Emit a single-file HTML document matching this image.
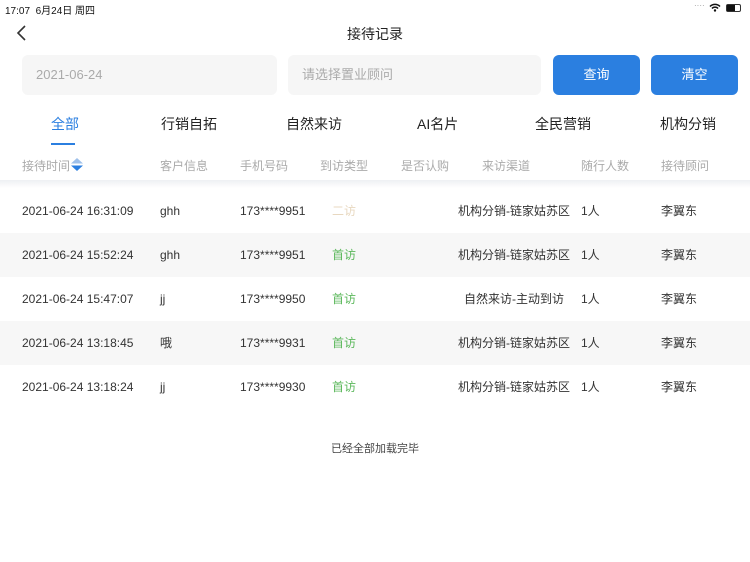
<!DOCTYPE html>
<html><head><meta charset="utf-8"><style>
*{margin:0;padding:0;box-sizing:border-box}
body{width:750px;height:562px;background:#fff;font-family:"Liberation Sans","Noto Sans CJK SC",sans-serif;position:relative;overflow:hidden;color:#333}
.a{position:absolute;white-space:nowrap}
.inp{position:absolute;top:55px;height:40px;background:#f6f6f6;border-radius:6px;color:#aaa;font-size:13px;line-height:40px;padding-left:14px}
.btn{position:absolute;top:55px;height:40px;background:#2b7fe0;border-radius:6px;color:#fff;font-size:13px;line-height:40px;text-align:center}
.tab{position:absolute;top:114px;font-size:14px;color:#222}
.th{position:absolute;top:157px;font-size:12px;color:#aaa}
.row{position:absolute;left:0;width:750px;height:44px;font-size:12px;line-height:45px;color:#333}
.row span{position:absolute}
.g{background:#f7f7f7}
</style></head><body>
<div class="a" style="left:5px;top:2px;font-size:10px;color:#111">17:07&nbsp;&nbsp;6月24日 周四</div>
<div class="a" style="left:694px;top:1px;font-size:8px;color:#999">····</div>
<svg class="a" style="left:709px;top:3px" width="12" height="9" viewBox="0 0 12 9"><path d="M1 3.5a7 7 0 0 1 10 0M3 5.5a4 4 0 0 1 6 0" stroke="#111" stroke-width="1.5" fill="none"/><circle cx="6" cy="7.5" r="1.2" fill="#111"/></svg>
<div class="a" style="left:726px;top:4px;width:15px;height:8px;border:1px solid #333;border-radius:2px"><div style="width:8px;height:6px;background:#111"></div></div>
<svg class="a" style="left:16px;top:25px" width="12" height="16" viewBox="0 0 12 16"><path d="M9 1L2 8l7 7" stroke="#333" stroke-width="1.6" fill="none"/></svg>
<div class="a" style="left:0;width:750px;text-align:center;top:24px;font-size:14px;color:#222">接待记录</div>
<div class="inp" style="left:22px;width:255px">2021-06-24</div>
<div class="inp" style="left:288px;width:253px">请选择置业顾问</div>
<div class="btn" style="left:553px;width:87px">查询</div>
<div class="btn" style="left:651px;width:87px">清空</div>
<div class="tab" style="left:51px;color:#2b7fe0">全部</div>
<div class="a" style="left:51px;top:143px;width:24px;height:2px;background:#2b7fe0"></div>
<div class="tab" style="left:161px">行销自拓</div>
<div class="tab" style="left:286px">自然来访</div>
<div class="tab" style="left:417px">AI名片</div>
<div class="tab" style="left:535px">全民营销</div>
<div class="tab" style="left:660px">机构分销</div>
<div class="th" style="left:22px">接待时间</div>
<svg class="a" style="left:70px;top:157px" width="14" height="15" viewBox="0 0 14 15"><path d="M1 6.5L7 1l6 5.5z" fill="#9ec0ea"/><path d="M1 8.5l6 5.5 6-5.5z" fill="#2b7fe0"/></svg>
<div class="th" style="left:160px">客户信息</div>
<div class="th" style="left:240px">手机号码</div>
<div class="th" style="left:320px">到访类型</div>
<div class="th" style="left:401px">是否认购</div>
<div class="th" style="left:482px">来访渠道</div>
<div class="th" style="left:581px">随行人数</div>
<div class="th" style="left:661px">接待顾问</div>
<div class="a" style="left:0;top:180px;width:750px;height:8px;background:linear-gradient(#eef0f3,#fff)"></div>
<div class="row" style="top:189px"><span style="left:22px">2021-06-24 16:31:09</span><span style="left:160px">ghh</span><span style="left:240px">173****9951</span><span style="left:332px;color:#e8d8c0">二访</span><span style="left:458px">机构分销-链家姑苏区</span><span style="left:581px">1人</span><span style="left:661px">李翼东</span></div>
<div class="row g" style="top:233px"><span style="left:22px">2021-06-24 15:52:24</span><span style="left:160px">ghh</span><span style="left:240px">173****9951</span><span style="left:332px;color:#5cb85c">首访</span><span style="left:458px">机构分销-链家姑苏区</span><span style="left:581px">1人</span><span style="left:661px">李翼东</span></div>
<div class="row" style="top:277px"><span style="left:22px">2021-06-24 15:47:07</span><span style="left:160px">jj</span><span style="left:240px">173****9950</span><span style="left:332px;color:#5cb85c">首访</span><span style="left:464px">自然来访-主动到访</span><span style="left:581px">1人</span><span style="left:661px">李翼东</span></div>
<div class="row g" style="top:321px"><span style="left:22px">2021-06-24 13:18:45</span><span style="left:160px">哦</span><span style="left:240px">173****9931</span><span style="left:332px;color:#5cb85c">首访</span><span style="left:458px">机构分销-链家姑苏区</span><span style="left:581px">1人</span><span style="left:661px">李翼东</span></div>
<div class="row" style="top:365px"><span style="left:22px">2021-06-24 13:18:24</span><span style="left:160px">jj</span><span style="left:240px">173****9930</span><span style="left:332px;color:#5cb85c">首访</span><span style="left:458px">机构分销-链家姑苏区</span><span style="left:581px">1人</span><span style="left:661px">李翼东</span></div>
<div class="a" style="left:0;width:750px;text-align:center;top:440px;font-size:11px;color:#444">已经全部加载完毕</div>
</body></html>
